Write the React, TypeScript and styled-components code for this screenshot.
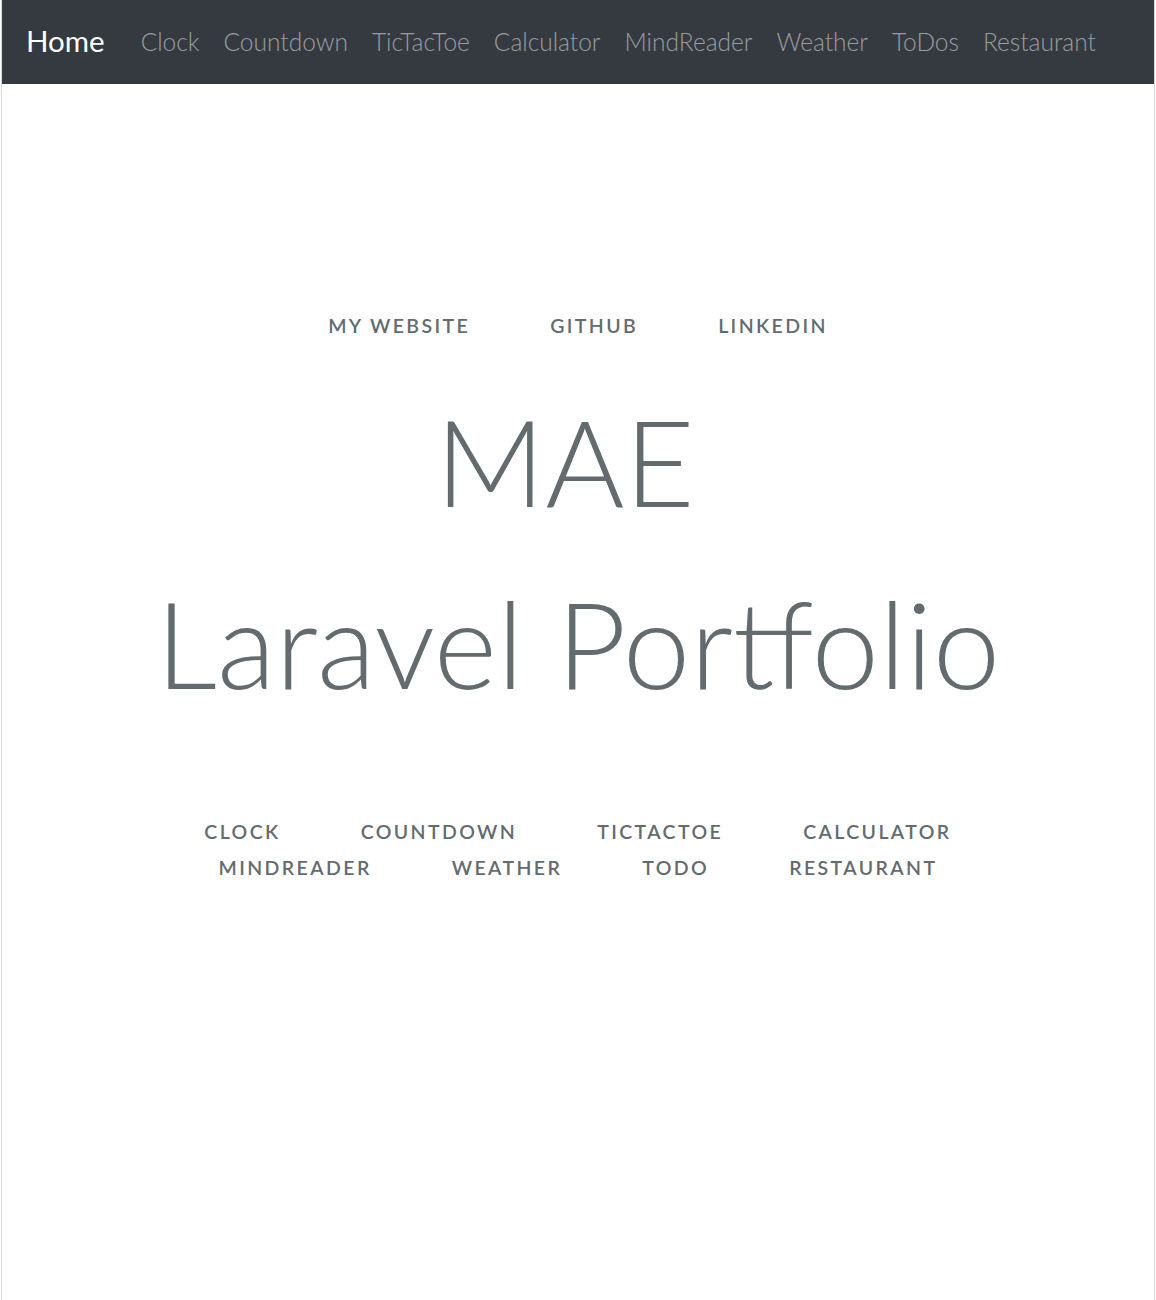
import React from "react";
import styled, { createGlobalStyle } from "styled-components";

const GlobalStyle = createGlobalStyle`
  html, body {
    margin: 0;
    padding: 0;
    background: #ffffff;
  }
  body {
    font-family: "Lato", "Open Sans", sans-serif;
    color: #636b6f;
  }
  * { box-sizing: border-box; }
`;

const Frame = styled.div`
  margin: 0 1px;
  min-height: 1300px;
  border-left: 1px solid #d9d9d9;
  border-right: 1px solid #d9d9d9;
  background: #ffffff;
`;

const NavBar = styled.nav`
  height: 84px;
  background: #343a40;
  display: flex;
  align-items: center;
  padding: 0 24px;
`;

const Brand = styled.a`
  font-family: "Lato", sans-serif;
  font-weight: 400;
  font-size: 29.5px;
  color: #ffffff;
  text-decoration: none;
  margin-right: 24px;
  line-height: 1;
  padding-bottom: 2px;
`;

const NavList = styled.div`
  display: flex;
  align-items: center;
`;

const NavLink = styled.a`
  font-family: "Lato", sans-serif;
  font-weight: 300;
  font-size: 24.5px;
  color: rgba(255, 255, 255, 0.5);
  text-decoration: none;
  padding: 0 12px;
  line-height: 1;
`;

const Main = styled.main`
  display: flex;
  flex-direction: column;
  align-items: center;
  padding-top: 224px;
  text-align: center;
`;

const LinkRow = styled.div<{ $spacing?: number }>`
  display: flex;
  justify-content: center;
  line-height: 36px;
  margin-bottom: ${(p) => p.$spacing ?? 0}px;
`;

const UpperLink = styled.a`
  font-family: "Lato", sans-serif;
  font-weight: 600;
  font-size: 19.5px;
  letter-spacing: 2.4px;
  text-transform: uppercase;
  color: #636b6f;
  text-decoration: none;
  padding: 0 40px;
`;

const Title = styled.h1`
  margin: 0 0 80px;
  font-family: "Lato", sans-serif;
  font-weight: 300;
  font-size: 121px;
  line-height: 182px;
  color: #636b6f;
  white-space: nowrap;
`;

const TitleWord = styled.span`
  margin-right: 26px;
`;

const navItems = [
  "Clock",
  "Countdown",
  "TicTacToe",
  "Calculator",
  "MindReader",
  "Weather",
  "ToDos",
  "Restaurant",
];

const profileLinks = ["My Website", "GitHub", "LinkedIn"];
const appRows = [
  ["Clock", "Countdown", "TicTacToe", "Calculator"],
  ["MindReader", "Weather", "ToDo", "Restaurant"],
];

export default function App() {
  return (
    <>
      <GlobalStyle />
      <Frame>
        <NavBar>
          <Brand href="#">Home</Brand>
          <NavList>
            {navItems.map((item) => (
              <NavLink key={item} href="#">
                {item}
              </NavLink>
            ))}
          </NavList>
        </NavBar>
        <Main>
          <LinkRow $spacing={26}>
            {profileLinks.map((l) => (
              <UpperLink key={l} href="#">
                {l}
              </UpperLink>
            ))}
          </LinkRow>
          <Title>
            <TitleWord>MAE</TitleWord>
            <br />
            Laravel Portfolio
          </Title>
          {appRows.map((row, i) => (
            <LinkRow key={i}>
              {row.map((l) => (
                <UpperLink key={l} href="#">
                  {l}
                </UpperLink>
              ))}
            </LinkRow>
          ))}
        </Main>
      </Frame>
    </>
  );
}
